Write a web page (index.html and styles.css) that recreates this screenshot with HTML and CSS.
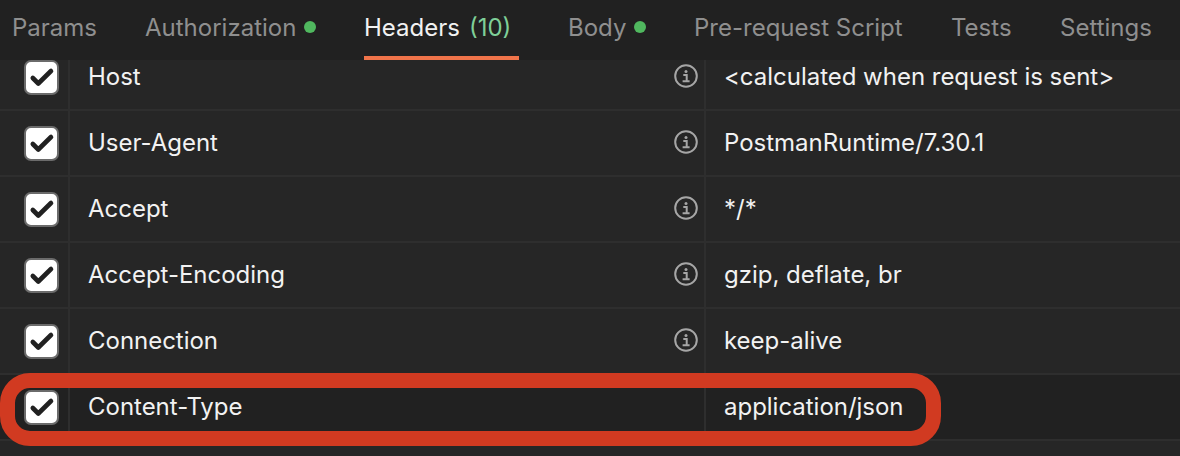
FILE: index.html
```html
<!DOCTYPE html>
<html lang="en">
<head>
    <meta charset="UTF-8">
    <title>Headers</title>
    <link rel="stylesheet" href="styles.css">
</head>
<body>
    <svg class="icon-defs" width="0" height="0">
        <symbol id="check" viewBox="0 0 31 31">
            <path d="M6.8 16l5.5 5.5L25 9" fill="none" stroke="#212121" stroke-width="4.6" stroke-linecap="round" stroke-linejoin="round"/>
        </symbol>
        <symbol id="info" viewBox="0 0 24 24">
            <circle cx="12" cy="12" r="10.8" fill="none" stroke="#a6a6a6" stroke-width="2"/>
            <circle cx="12" cy="7.4" r="1.5" fill="#a6a6a6"/>
            <path d="M9.3 11h3.4v6M8.6 17.3h7" fill="none" stroke="#a6a6a6" stroke-width="2"/>
        </symbol>
    </svg>

    <!-- Request tabs -->
    <nav class="tabs">
        <a class="tab tab-params">Params</a>
        <a class="tab tab-auth">Authorization <i class="dot"></i></a>
        <a class="tab tab-headers active">Headers <span class="count">(10)</span></a>
        <a class="tab tab-body">Body <i class="dot"></i></a>
        <a class="tab tab-script">Pre-request Script</a>
        <a class="tab tab-tests">Tests</a>
        <a class="tab tab-settings">Settings</a>
    </nav>

    <!-- Header rows, scrolled so the first one is cut off a little -->
    <div class="table">
        <div class="rows">
            <div class="row">
                <div class="cell-check"><span class="checkbox"><svg><use href="#check"/></svg></span></div>
                <div class="cell-key">Host <svg class="info"><use href="#info"/></svg></div>
                <div class="cell-value">&lt;calculated when request is sent&gt;</div>
            </div>
            <div class="row">
                <div class="cell-check"><span class="checkbox"><svg><use href="#check"/></svg></span></div>
                <div class="cell-key">User-Agent <svg class="info"><use href="#info"/></svg></div>
                <div class="cell-value">PostmanRuntime/7.30.1</div>
            </div>
            <div class="row">
                <div class="cell-check"><span class="checkbox"><svg><use href="#check"/></svg></span></div>
                <div class="cell-key">Accept <svg class="info"><use href="#info"/></svg></div>
                <div class="cell-value">*/*</div>
            </div>
            <div class="row">
                <div class="cell-check"><span class="checkbox"><svg><use href="#check"/></svg></span></div>
                <div class="cell-key">Accept-Encoding <svg class="info"><use href="#info"/></svg></div>
                <div class="cell-value">gzip, deflate, br</div>
            </div>
            <div class="row">
                <div class="cell-check"><span class="checkbox"><svg><use href="#check"/></svg></span></div>
                <div class="cell-key">Connection <svg class="info"><use href="#info"/></svg></div>
                <div class="cell-value">keep-alive</div>
            </div>
            <div class="row row-hover">
                <div class="cell-check"><span class="checkbox"><svg><use href="#check"/></svg></span></div>
                <div class="cell-key">Content-Type</div>
                <div class="cell-value">application/json</div>
            </div>
            <div class="row"></div>
        </div>
    </div>

    <!-- Red annotation drawn over the screenshot -->
    <div class="annotation"></div>
</body>
</html>
```

FILE: styles.css
```css
html, body {
    margin: 0;
    padding: 0;
    height: 456px;
    overflow: hidden;
}

body {
    position: relative;
    background-color: #262626;
    color: #f2f2f2;
    font-family: Inter, "Liberation Sans", sans-serif;
    font-size: 24px;
}

.icon-defs {
    position: absolute;
}

/* Tabs */
.tabs {
    position: relative;
    z-index: 1;
    display: flex;
    height: 60px;
    padding-left: 12px;
    box-sizing: border-box;
    background-color: #212121;
}

.tab {
    display: flex;
    align-items: center;
    height: 54px;
    white-space: nowrap;
    color: #8f8f8f;
}

.tab-params { width: 133px; }
.tab-auth { width: 219px; }
.tab-headers { width: 204px; }
.tab-body { width: 126px; }
.tab-script { width: 257px; }
.tab-tests { width: 109px; }

.tab.active {
    color: #f2f2f2;
    position: relative;
}

.tab.active::after {
    content: "";
    position: absolute;
    left: 0;
    bottom: -6px;
    width: 155px;
    height: 4px;
    background-color: #f0744a;
}

.dot {
    display: inline-block;
    width: 12px;
    height: 12px;
    margin-left: 8px;
    border-radius: 50%;
    background-color: #50b85f;
}

.count {
    margin-left: 9px;
    color: #7fcf98;
}

/* Table rows */
.table {
    height: 396px;
    overflow: hidden;
}

.rows {
    margin-top: -15px;
    letter-spacing: -0.02px;
}

.row {
    display: flex;
    height: 66px;
    box-sizing: border-box;
    border-bottom: 2px solid #2e2e2e;
}

.row-hover {
    background-color: #212121;
}

.cell-check {
    display: flex;
    align-items: center;
    flex-shrink: 0;
    width: 70px;
    padding-left: 24px;
    box-sizing: border-box;
    border-right: 2px solid #2e2e2e;
}

.checkbox {
    display: block;
    width: 35px;
    height: 35px;
    box-sizing: border-box;
    border: 2px solid #6b6b6b;
    border-radius: 7px;
    background-color: #fff;
}

.checkbox svg {
    display: block;
    width: 31px;
    height: 31px;
}

.cell-key {
    display: flex;
    justify-content: space-between;
    align-items: center;
    width: 636px;
    padding: 0 6px 2px 18px;
    box-sizing: border-box;
    border-right: 2px solid #2e2e2e;
}

.info {
    width: 24px;
    height: 24px;
}

.cell-value {
    display: flex;
    align-items: center;
    padding: 0 0 2px 18px;
}

/* Annotation */
.annotation {
    position: absolute;
    z-index: 2;
    left: 0;
    top: 373px;
    width: 941px;
    height: 73px;
    box-sizing: border-box;
    border: 15px solid #d13a21;
    border-radius: 30px;
}
```
